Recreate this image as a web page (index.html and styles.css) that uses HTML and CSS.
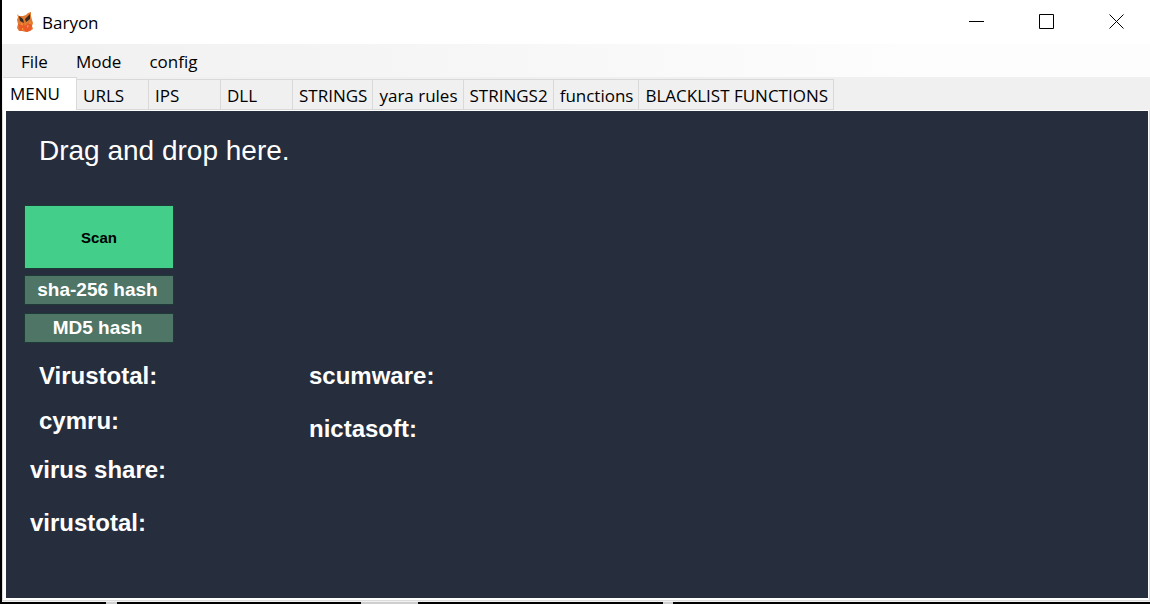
FILE: index.html
```html
<!DOCTYPE html>
<html lang="en">
<head>
<meta charset="utf-8">
<title>Baryon</title>
<link rel="stylesheet" href="styles.css">
</head>
<body>
<div class="window">
  <header class="titlebar">
    <svg class="logo" viewBox="0 0 18 22" aria-hidden="true">
      <path d="M1 3l2 2 4 0 3-1 2-2 3-1 0 4 1 4 1 3-1 3 1 3-3 2-4 1-4-1-3 0-2-3 1-4-1-4 1-3z" fill="#e07a30"/>
      <path d="M3 5l4 3 1 4-4-2zM9 8l5-5v5l-4 3z" fill="#3b2a22"/>
      <path d="M2 13l3 1 2-2 2 3 3-3 4 2-1 5-4 2-3-2-4 1z" fill="#ea5a28"/>
      <path d="M5 12l2 1-1 2zM11 14l2 1-2 2zM6 17l2 1-2 1zM14 11l1 1-2 1z" fill="#f7a13c"/>
    </svg>
    <h1 class="title">Baryon</h1>
    <div class="controls">
      <button class="control" aria-label="Minimize"><svg viewBox="0 0 15 15"><path d="M0 7.500h15"/></svg></button>
      <button class="control" aria-label="Maximize"><svg viewBox="0 0 15 15"><path d="M.5.5h14v14H.5z"/></svg></button>
      <button class="control" aria-label="Close"><svg viewBox="0 0 15 15"><path d="M.5.5l14 14M14.500.5l-14 14"/></svg></button>
    </div>
  </header>
  <nav class="menubar">
    <button class="menu">File</button>
    <button class="menu">Mode</button>
    <button class="menu">config</button>
  </nav>
  <div class="tabs" role="tablist">
    <button class="tab active" role="tab" aria-selected="true">MENU</button>
    <button class="tab" role="tab">URLS</button>
    <button class="tab" role="tab">IPS</button>
    <button class="tab" role="tab">DLL</button>
    <button class="tab" role="tab">STRINGS</button>
    <button class="tab" role="tab">yara rules</button>
    <button class="tab" role="tab">STRINGS2</button>
    <button class="tab" role="tab">functions</button>
    <button class="tab" role="tab">BLACKLIST FUNCTIONS</button>
  </div>
  <main class="page">
    <div class="panel">
      <p class="drop">Drag and drop here.</p>
      <div class="actions">
        <button class="action scan">Scan</button>
        <div class="hashes">
          <button class="action hash">sha-256 hash</button>
          <button class="action hash">MD5 hash</button>
        </div>
      </div>
      <div class="results">
        <div class="column">
          <div class="group inset">
            <p class="result">Virustotal:</p>
            <p class="result">cymru:</p>
          </div>
          <div class="group loose">
            <p class="result">virus share:</p>
            <p class="result">virustotal:</p>
          </div>
        </div>
        <div class="group loose">
          <p class="result">scumware:</p>
          <p class="result">nictasoft:</p>
        </div>
      </div>
    </div>
  </main>
</div>
<div class="desktop"><i class="gap-a"></i><i class="gap-b"></i><i class="gap-c"></i></div>
</body>
</html>
```
FILE: styles.css
```css
* { box-sizing: border-box; }
body {
  margin: 0;
  min-height: 100vh;
  display: flex;
  flex-direction: column;
  background: #000;
  font: 17px/24px "Segoe UI", "Open Sans", "Noto Sans", sans-serif;
  color: #000;
}
button { font: inherit; color: inherit; border: 0; padding: 0; background: none; }
h1, p { margin: 0; font-weight: 400; }
.window {
  flex: 1;
  display: flex;
  flex-direction: column;
  margin-left: 2px;
  background: #f0f0f0;
}
.titlebar {
  display: flex;
  align-items: center;
  height: 44px;
  padding-left: 14px;
  background: #fff;
}
.logo { width: 18px; height: 22px; margin-right: 8px; }
.title { padding-top: 2px; font-size: 17px; line-height: 24px; }
.controls { display: flex; margin-left: auto; }
.control { display: grid; place-items: center; width: 70px; height: 44px; padding: 0 0 2px 3px; }
.control svg { width: 15px; height: 15px; fill: none; stroke: #000; stroke-width: 1; }
.menubar {
  display: flex;
  gap: 28px;
  height: 33px;
  padding: 2px 19px 0;
  background: linear-gradient(90deg, #f0f0f0, #fdfdfd 80%);
}
.tabs { display: flex; align-items: flex-end; height: 33px; padding-left: 1px; }
.tab {
  height: 31px;
  min-width: 72px;
  padding: 2px 5px 0 6px;
  border: 1px solid #d9d9d9;
  border-left: 0;
  text-align: left;
  white-space: nowrap;
}
.active {
  height: 33px;
  min-width: 74px;
  padding: 0 5px 1px 7px;
  border-bottom: 0;
  background: #fff;
}
.page {
  flex: 1;
  display: flex;
  padding: 1px 1px 2px 3px;
  margin-bottom: 1px;
  border: 1px solid #dcdcdc;
  border-top: 0;
  background: #fff;
}
.panel {
  flex: 1;
  padding: 23px 18px;
  background: #262d3d;
  color: #fff;
  font-family: Arial, "Liberation Sans", sans-serif;
}
.drop { padding-left: 15px; font-size: 28px; line-height: 34px; }
.actions {
  display: flex;
  flex-direction: column;
  gap: 6px;
  width: 150px;
  margin-top: 37px;
}
.hashes { display: flex; flex-direction: column; gap: 8px; }
.action { border: 1px solid #1d3a36; font-weight: 700; text-align: center; }
.scan {
  height: 64px;
  padding-top: 2px;
  background: #43ce8a;
  color: #000;
  font-family: "Arial Narrow", "Liberation Sans Narrow", "Liberation Sans", sans-serif;
  font-size: 15px;
}
.hash { height: 30px; padding-right: 3px; background: #4f7566; font-size: 19px; line-height: 24px; }
.results {
  display: grid;
  grid-template-columns: 279px 1fr;
  align-items: start;
  margin-top: 16px;
  padding-left: 6px;
  font-family: "Arial Narrow", "Liberation Sans Narrow", "Liberation Sans", sans-serif;
  font-size: 24px;
  line-height: 34px;
}
.column { display: flex; flex-direction: column; gap: 15px; }
.group { display: flex; flex-direction: column; gap: 11px; }
.loose { gap: 19px; }
.result { font-weight: 700; }
.inset { padding-left: 9px; }
.desktop {
  display: grid;
  grid-template-columns: 106px 11px 244px 57px 245px 10px 1fr;
  height: 2px;
}
.desktop i { background: #cfcfcf; }
.gap-a { grid-column: 2; }
.gap-b { grid-column: 4; }
.gap-c { grid-column: 6; }
```
